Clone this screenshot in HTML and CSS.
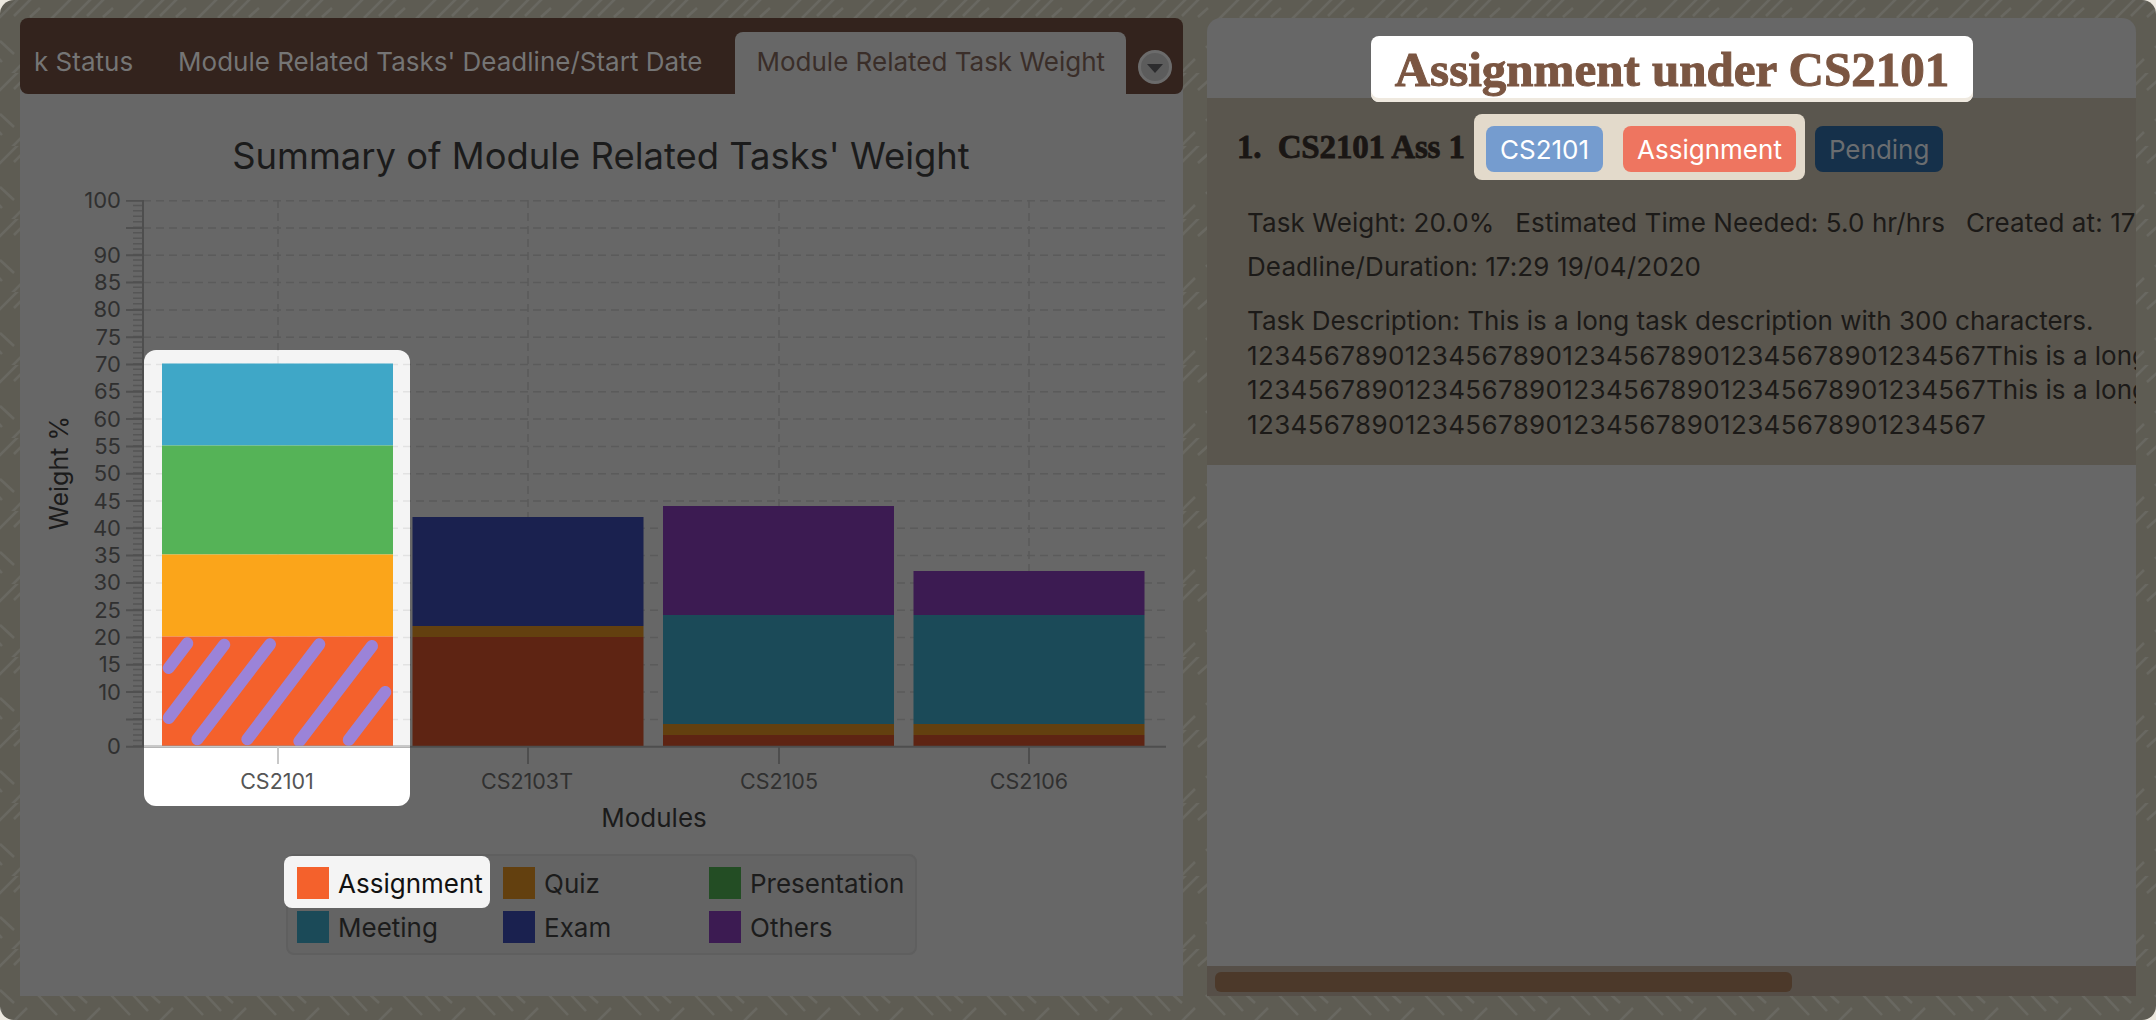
FILE: index.html
```html
<!DOCTYPE html>
<html>
 <head>
  <meta charset="utf-8">
  <title>Assignment under CS2101</title>
  <link rel="stylesheet" href="styles.css">
 </head>
<body>
 <div class="app">

  <div class="leftPanel">
   <div class="tabBar">
    <div class="tab">k Status</div>
    <div class="tab">Module Related Tasks' Deadline/Start Date</div>
    <div class="tab tabActive">Module Related Task Weight</div>
    <div class="tabMenu"><span class="tabArrow"></span></div>
   </div>

   <div class="chartArea">
    <svg class="chart" width="1163" height="756" viewBox="20 94 1163 756">
     <defs>
      <path id="hGrid" d="M143 228H1165M143 255.3H1165M143 282.6H1165M143 309.9H1165M143 337.2H1165M143 364.5H1165M143 391.8H1165M143 419.1H1165M143 446.4H1165M143 473.7H1165M143 501H1165M143 528.3H1165M143 555.6H1165M143 582.9H1165M143 610.2H1165M143 637.5H1165M143 664.8H1165M143 692.1H1165M143 719.4H1165M143 200.7H1165"/>
      <path id="vGrid" d="M278 200V746M528 200V746M779 200V746M1029 200V746"/>
      <clipPath id="spotClip"><rect x="144" y="350" width="266" height="397"/></clipPath>
     </defs>

     <text class="chartTitle" x="601" y="169">Summary of Module Related Tasks' Weight</text>

     <use href="#hGrid" class="grid"/>
     <use href="#vGrid" class="grid"/>

     <!-- highlighted first column -->
     <path class="spotTop" d="M144 747V362a12 12 0 0 1 12-12H398a12 12 0 0 1 12 12V747Z"/>
     <path class="spotBottom" d="M144 747H410V794a12 12 0 0 1-12 12H156a12 12 0 0 1-12-12Z"/>
     <g clip-path="url(#spotClip)">
      <use href="#hGrid" class="gridSpot"/>
      <use href="#vGrid" class="gridSpot"/>
     </g>

     <!-- axis ticks -->
     <line class="tickMinor" x1="138" y1="746.7" x2="138" y2="200"/>
     <line class="tickMajor" x1="134.5" y1="747.7" x2="134.5" y2="200"/>
     <line class="axisLine" x1="143" y1="200" x2="143" y2="747"/>

     <g class="yLabels">
      <text x="121" y="208">100</text>
      <text x="121" y="263">90</text>
      <text x="121" y="290">85</text>
      <text x="121" y="317">80</text>
      <text x="121" y="345">75</text>
      <text x="121" y="372">70</text>
      <text x="121" y="399">65</text>
      <text x="121" y="427">60</text>
      <text x="121" y="454">55</text>
      <text x="121" y="481">50</text>
      <text x="121" y="509">45</text>
      <text x="121" y="536">40</text>
      <text x="121" y="563">35</text>
      <text x="121" y="590">30</text>
      <text x="121" y="618">25</text>
      <text x="121" y="645">20</text>
      <text x="121" y="672">15</text>
      <text x="121" y="700">10</text>
      <text x="121" y="754">0</text>
     </g>

     <text class="axisTitle" transform="translate(68 473) rotate(-90)">Weight %</text>

     <!-- CS2101 -->
     <rect x="162" y="363.5" width="231" height="82" fill="#3fa7c7"/>
     <rect x="162" y="445.5" width="231" height="109" fill="#55b357"/>
     <rect x="162" y="554.5" width="231" height="82" fill="#fba51a"/>
     <rect x="162" y="636.5" width="231" height="109.5" fill="#f4612c"/>
     <g class="stripes">
      <line x1="187.3" y1="643.3" x2="168.7" y2="668"/>
      <line x1="224.3" y1="644.7" x2="168.7" y2="718"/>
      <line x1="270" y1="644.3" x2="197.3" y2="739.3"/>
      <line x1="319.3" y1="644.3" x2="247.3" y2="739.3"/>
      <line x1="372" y1="646" x2="299.3" y2="741.3"/>
      <line x1="385.3" y1="692" x2="348.7" y2="740"/>
     </g>

     <!-- CS2103T -->
     <rect x="412.5" y="517" width="231" height="109" fill="#1a214f"/>
     <rect x="412.5" y="626" width="231" height="11" fill="#63400f"/>
     <rect x="412.5" y="637" width="231" height="109" fill="#5e2413"/>

     <!-- CS2105 -->
     <rect x="663" y="506" width="231" height="109" fill="#3c1b52"/>
     <rect x="663" y="615" width="231" height="109" fill="#1b4a58"/>
     <rect x="663" y="724" width="231" height="11" fill="#63400f"/>
     <rect x="663" y="735" width="231" height="11" fill="#5e2413"/>

     <!-- CS2106 -->
     <rect x="913.5" y="571" width="231" height="44" fill="#3c1b52"/>
     <rect x="913.5" y="615" width="231" height="109" fill="#1b4a58"/>
     <rect x="913.5" y="724" width="231" height="11" fill="#63400f"/>
     <rect x="913.5" y="735" width="231" height="11" fill="#5e2413"/>

     <line class="axisLine" x1="143" y1="746.7" x2="1166" y2="746.7"/>
     <line class="axisSpot" x1="144" y1="746.7" x2="410" y2="746.7"/>

     <line class="axisSpot" x1="278" y1="747" x2="278" y2="764"/>
     <line class="axisLine" x1="528" y1="747" x2="528" y2="764"/>
     <line class="axisLine" x1="779" y1="747" x2="779" y2="764"/>
     <line class="axisLine" x1="1029" y1="747" x2="1029" y2="764"/>

     <text class="xLabel xLabelSpot" x="277" y="789">CS2101</text>
     <text class="xLabel" x="527" y="789">CS2103T</text>
     <text class="xLabel" x="779" y="789">CS2105</text>
     <text class="xLabel" x="1029" y="789">CS2106</text>

     <text class="axisTitleX" x="654" y="827">Modules</text>
    </svg>

    <div class="legend">
     <div class="legendItem legendActive"><span class="swatch swAssignment"></span>Assignment</div>
     <div class="legendItem"><span class="swatch swQuiz"></span>Quiz</div>
     <div class="legendItem"><span class="swatch swPresentation"></span>Presentation</div>
     <div class="legendItem"><span class="swatch swMeeting"></span>Meeting</div>
     <div class="legendItem"><span class="swatch swExam"></span>Exam</div>
     <div class="legendItem"><span class="swatch swOthers"></span>Others</div>
    </div>
   </div>
  </div>

  <div class="rightPanel">
   <div class="listHeader">
    <div class="listTitle">Assignment under CS2101</div>
   </div>

   <div class="taskCard">
    <div class="taskHead">
     <div class="taskName">1.&nbsp; CS2101 Ass 1</div>
     <div class="tagGroup">
      <span class="tag tagModule">CS2101</span>
      <span class="tag tagType">Assignment</span>
     </div>
     <span class="tag tagStatus">Pending</span>
    </div>
    <div class="taskMeta">
     <span>Task Weight: 20.0%</span>
     <span>Estimated Time Needed: 5.0 hr/hrs</span>
     <span>Created at: 17:29 19/04/2020</span>
    </div>
    <div class="taskMeta metaSecond">Deadline/Duration: 17:29 19/04/2020</div>
    <div class="taskDesc">
     <div>Task Description: This is a long task description with 300 characters.</div>
     <div><span class="digits">12345678901234567890123456789012345678901234567</span>This is a long task description</div>
     <div><span class="digits">12345678901234567890123456789012345678901234567</span>This is a long task description</div>
     <div><span class="digits">12345678901234567890123456789012345678901234567</span></div>
    </div>
   </div>

   <div class="listFiller"></div>

   <div class="scrollTrack"><div class="scrollThumb"></div></div>
  </div>

 </div>
</body>
</html>
```

FILE: styles.css
```css
html, body {
  margin: 0;
  padding: 0;
  background-color: #ece8df;
  font-family: "Inter", "Liberation Sans", sans-serif;
}

.app {
  box-sizing: border-box;
  width: 2156px;
  height: 1020px;
  padding: 18px 20px 24px 20px;
  display: flex;
  gap: 24px;
  overflow: hidden;
  border-radius: 14px;
  background-color: #5e5c53;
  background-image: url("data:image/svg+xml,%3Csvg xmlns='http://www.w3.org/2000/svg' width='73' height='73'%3E%3Cg stroke='%23696861' stroke-width='2.5' fill='none'%3E%3Cpath d='M-1 18L18 -1M72 18L91 -1M14 16L32 -2M12 74L27 59M30 17L40 8M50 20L73 -3M0 41L14 54M73 41L87 54M38 46L57 66M60 46L75 62M-13 46L2 62'/%3E%3C/g%3E%3C/svg%3E");
}

/* left side: tabs and chart */
.leftPanel {
  width: 1163px;
  flex: none;
  display: flex;
  flex-direction: column;
  background: linear-gradient(transparent 40px, #676767 40px);
}

.tabBar {
  height: 76px;
  flex: none;
  box-sizing: border-box;
  display: flex;
  align-items: flex-end;
  gap: 12px;
  padding-left: 2px;
  border-radius: 8px;
  background-color: #33231d;
  font-size: 26px;
  color: #757575;
  white-space: nowrap;
}

.tab {
  height: 62px;
  line-height: 60px;
  padding: 0 12px;
}

.tab + .tab {
  padding: 0 21px;
}

.tabActive {
  border-radius: 8px 8px 0 0;
  background-color: #676767;
  color: #3a2e29;
}

.tabMenu {
  box-sizing: border-box;
  width: 34px;
  height: 34px;
  margin-bottom: 10px;
  display: flex;
  align-items: center;
  justify-content: center;
  border: 3px solid #6b6b6b;
  border-radius: 50%;
  background-color: #5c5c5c;
}

.tabArrow {
  width: 0;
  height: 0;
  margin-top: 2px;
  border-left: 8px solid transparent;
  border-right: 8px solid transparent;
  border-top: 9px solid #2c2c2e;
}

.chartArea {
  flex: 1;
}

.chart {
  display: block;
}

.chart text {
  font-family: "Inter", "Liberation Sans", sans-serif;
}

.chartTitle {
  font-size: 36.4px;
  fill: #1b1b1b;
  text-anchor: middle;
}

.grid {
  fill: none;
  stroke: #5b5b5b;
  stroke-width: 1.5;
  stroke-dasharray: 8 5;
}

.gridSpot {
  fill: none;
  stroke: #e2e2e2;
  stroke-width: 1.5;
  stroke-dasharray: 8 5;
}

.spotTop { fill: #f4f4f4; }
.spotBottom { fill: #ffffff; }

.tickMinor {
  stroke: #565656;
  stroke-width: 10;
  stroke-dasharray: 1.5 3.96;
}

.tickMajor {
  stroke: #505050;
  stroke-width: 17;
  stroke-dasharray: 2 25.3;
}

.axisLine {
  stroke: #4e4e4e;
  stroke-width: 2;
}

.axisSpot {
  stroke: #c8c8c8;
  stroke-width: 2;
}

.yLabels text {
  font-size: 22px;
  fill: #303030;
  text-anchor: end;
}

.axisTitle {
  font-size: 25px;
  fill: #1b1b1b;
  text-anchor: middle;
}

.axisTitleX {
  font-size: 26px;
  fill: #1b1b1b;
  text-anchor: middle;
}

.xLabel {
  font-size: 21.5px;
  fill: #303030;
  text-anchor: middle;
}

.xLabelSpot {
  fill: #555555;
}

.stripes line {
  stroke: #9b83d8;
  stroke-width: 12;
  stroke-linecap: round;
}

.legend {
  box-sizing: border-box;
  width: 631px;
  height: 101px;
  margin: 4px 0 0 266px;
  padding: 11px 0 0 9px;
  display: grid;
  grid-template-columns: repeat(3, 206px);
  grid-auto-rows: 32px;
  row-gap: 12px;
  border: 2px solid #5f5f5f;
  border-radius: 8px;
  background-color: #646464;
  font-size: 26px;
  color: #1c1c1c;
}

.legendItem {
  position: relative;
  z-index: 0;
  display: flex;
  align-items: center;
  gap: 9px;
  white-space: nowrap;
}

.legendActive {
  color: #111111;
}

.legendActive::before {
  content: "";
  position: absolute;
  left: -13px;
  top: -11px;
  width: 206px;
  height: 52px;
  z-index: -1;
  border-radius: 8px;
  background-color: #f4f4f4;
}

.swatch {
  width: 32px;
  height: 32px;
  flex: none;
}

.swAssignment { background-color: #f4612c; }
.swQuiz { background-color: #63400f; }
.swPresentation { background-color: #234d24; }
.swMeeting { background-color: #1b4a58; }
.swExam { background-color: #1a214f; }
.swOthers { background-color: #3c1b52; }

/* right side: task list */
.rightPanel {
  flex: 1;
  min-width: 0;
  display: flex;
  flex-direction: column;
  overflow: hidden;
  border-radius: 14px 14px 0 0;
  background-color: #676767;
}

.listHeader {
  height: 80px;
  flex: none;
  display: flex;
  justify-content: center;
  position: relative;
  z-index: 1;
}

.listTitle {
  box-sizing: border-box;
  width: 602px;
  height: 66px;
  margin: 18px 0 0 1px;
  display: flex;
  align-items: center;
  justify-content: center;
  border-radius: 8px;
  background-color: #ffffff;
  box-shadow: inset 0 -4px 0 #efe9df;
  font-family: "Liberation Serif", serif;
  font-weight: bold;
  font-size: 49px;
  color: #7b5642;
  -webkit-text-stroke: 1px #7b5642;
  white-space: nowrap;
}

.taskCard {
  height: 367px;
  flex: none;
  box-sizing: border-box;
  padding: 16px 0 0 30px;
  background-color: #5a564e;
  font-size: 26px;
  color: #1c1a18;
  white-space: nowrap;
}

.taskHead {
  display: flex;
  align-items: center;
}

.taskName {
  width: 237px;
  font-family: "Liberation Serif", serif;
  font-weight: bold;
  font-size: 33px;
  letter-spacing: -0.15px;
  color: #1a1614;
  -webkit-text-stroke: 0.8px #1a1614;
}

.tagGroup {
  display: flex;
  gap: 20px;
  padding: 12px 9px 8px 12px;
  height: 66px;
  box-sizing: border-box;
  border-radius: 8px;
  background-color: #e3dacb;
}

.tag {
  height: 46px;
  box-sizing: border-box;
  padding: 0 14px;
  display: flex;
  align-items: center;
  border-radius: 8px;
  color: #ffffff;
}

.tagModule { background-color: #759ccf; }
.tagType { background-color: #ee7560; }

.tagStatus {
  margin: 4px 0 0 10px;
  background-color: #15304a;
  color: #6a6d70;
}

.taskMeta {
  margin: 26px 0 0 10px;
  line-height: 34px;
  display: flex;
  gap: 21px;
  letter-spacing: 0.1px;
}

.metaSecond {
  margin-top: 10px;
}

.taskDesc {
  margin: 20px 0 0 10px;
  line-height: 34.5px;
}

.digits {
  letter-spacing: 0.35px;
}

.listFiller {
  flex: 1;
}

.scrollTrack {
  height: 30px;
  flex: none;
  box-sizing: border-box;
  padding: 6px 8px 4px 8px;
  background-color: #564f48;
}

.scrollThumb {
  width: 577px;
  height: 20px;
  border-radius: 6px;
  background-color: #4c392a;
}
```
